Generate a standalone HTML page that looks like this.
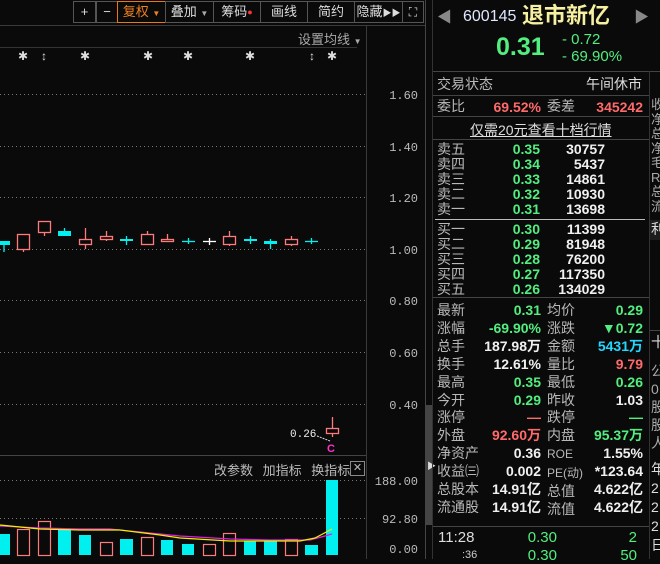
<!DOCTYPE html>
<html><head><meta charset="utf-8"><style>
*{margin:0;padding:0;box-sizing:border-box}
body{width:660px;height:559px;background:#0a0a0a;overflow:hidden;position:relative;font-family:"Liberation Sans","Noto Sans CJK SC",sans-serif;color:#ccc}
.a{position:absolute;white-space:nowrap}
.tb{position:absolute;top:1px;height:22px;border:1px solid #555;color:#ddd;font-size:13px;line-height:20px;text-align:center}
.lb{font-size:14px;color:#b8b8b8;line-height:15px}
.n{font-family:"Liberation Sans","Noto Sans CJK SC",sans-serif;font-weight:bold;font-size:14px;text-align:right}
.g{color:#52ee7f}.r{color:#ff6a6a}.w{color:#f0f0f0}.c{color:#22d8ff}
.hl{position:absolute;height:1px;background:#444}
</style></head><body>
<!-- toolbar -->
<div class="tb" style="left:73px;width:23px">+</div>
<div class="tb" style="left:96px;width:22px">−</div>
<div class="tb" style="left:117px;width:49px;border-color:#e87a10;color:#f08020">复权 <span style="font-size:8px">▼</span></div>
<div class="tb" style="left:165px;width:49px">叠加 <span style="font-size:8px;color:#aaa">▼</span></div>
<div class="tb" style="left:213px;width:48px">筹码<span style="color:#f33;font-size:9px;vertical-align:top">●</span></div>
<div class="tb" style="left:260px;width:48px">画线</div>
<div class="tb" style="left:307px;width:48px">简约</div>
<div class="tb" style="left:354px;width:49px">隐藏<span style="font-size:9px">▶▶</span></div>
<div class="tb" style="left:402px;width:22px;font-size:12px">⛶</div>
<div class="hl" style="left:0;top:25px;width:425px;background:#3a3a3a"></div>
<div class="a" style="left:298px;top:29px;font-size:13px;color:#aaa">设置均线 <span style="font-size:8px">▼</span></div>
<div class="hl" style="left:0;top:47px;width:357px;background:#333"></div>
<div class="hl" style="left:0;top:455px;width:366px;background:#444"></div>
<div class="a" style="left:366px;top:26px;width:1px;height:533px;background:#3a3a3a"></div>
<div class="a" style="left:425px;top:0;width:1px;height:559px;background:#444"></div>
<div class="a" style="left:426px;top:405px;width:6px;height:120px;background:#444"></div>
<div class="a" style="left:427px;top:459px;font-size:9px;color:#ddd">▶</div>
<div class="a" style="left:432px;top:0;width:1px;height:559px;background:#333"></div>
<svg class="a" style="left:0;top:0" width="425" height="559" xmlns="http://www.w3.org/2000/svg">
<g stroke="#777" stroke-dasharray="1 3" stroke-width="1">
<line x1="0" y1="94.5" x2="368" y2="94.5"/><line x1="0" y1="146.5" x2="368" y2="146.5"/><line x1="0" y1="197.5" x2="368" y2="197.5"/><line x1="0" y1="249.5" x2="368" y2="249.5"/><line x1="0" y1="300.5" x2="368" y2="300.5"/><line x1="0" y1="352.5" x2="368" y2="352.5"/><line x1="0" y1="404.5" x2="368" y2="404.5"/>
<line x1="0" y1="480.5" x2="368" y2="480.5"/><line x1="0" y1="518.5" x2="368" y2="518.5"/>
</g>
<g font-family="Liberation Mono,monospace" font-size="12" fill="#bbb" text-anchor="end">
<text x="418" y="99">1.60</text><text x="418" y="151">1.40</text><text x="418" y="202">1.20</text><text x="418" y="254">1.00</text><text x="418" y="305">0.80</text><text x="418" y="357">0.60</text><text x="418" y="409">0.40</text>
<text x="418" y="485">188.00</text><text x="418" y="523">92.80</text><text x="418" y="553">0.00</text>
</g>
<g fill="#ddd" font-size="12" font-family="Liberation Sans,sans-serif" text-anchor="middle">
<text x="23" y="60">✱</text><text x="44" y="60">↕</text><text x="85" y="60">✱</text><text x="148" y="60">✱</text><text x="188" y="60">✱</text><text x="250" y="60">✱</text><text x="312" y="60">↕</text><text x="332" y="60">✱</text>
</g>
<g stroke-width="1.3">
<line x1="4" y1="245" x2="4" y2="252" stroke="#00f0f0"/><rect x="0" y="241" width="10" height="4" fill="#00f0f0"/>
<line x1="23.5" y1="249" x2="23.5" y2="252" stroke="#ff7a7a"/><rect x="17.5" y="234.5" width="12" height="15" fill="none" stroke="#ff7a7a"/>
<line x1="44.5" y1="232" x2="44.5" y2="236" stroke="#ff7a7a"/><rect x="38.5" y="221.5" width="12" height="11" fill="none" stroke="#ff7a7a"/>
<line x1="64.5" y1="228" x2="64.5" y2="232" stroke="#00f0f0"/><rect x="58" y="231" width="13" height="5" fill="#00f0f0"/>
<line x1="85.5" y1="228" x2="85.5" y2="249" stroke="#ff7a7a"/><rect x="79.5" y="239.5" width="12" height="5" fill="#0a0a0a" stroke="#ff7a7a"/>
<line x1="106.5" y1="231" x2="106.5" y2="241" stroke="#ff7a7a"/><rect x="100.5" y="236.5" width="12" height="3" fill="#0a0a0a" stroke="#ff7a7a"/>
<line x1="126.5" y1="236" x2="126.5" y2="245" stroke="#00f0f0"/><rect x="120" y="239" width="13" height="2" fill="#00f0f0"/>
<line x1="147.5" y1="231" x2="147.5" y2="234" stroke="#ff7a7a"/><rect x="141.5" y="234.5" width="12" height="10" fill="none" stroke="#ff7a7a"/>
<line x1="167.5" y1="234" x2="167.5" y2="239" stroke="#ff7a7a"/><rect x="161.5" y="239.5" width="12" height="2" fill="none" stroke="#ff7a7a"/>
<line x1="188.5" y1="238" x2="188.5" y2="244" stroke="#00f0f0"/><line x1="182" y1="241.5" x2="195" y2="241.5" stroke="#00f0f0"/>
<line x1="209.5" y1="238" x2="209.5" y2="245" stroke="#fff"/><line x1="203" y1="241.5" x2="216" y2="241.5" stroke="#fff"/>
<line x1="229.5" y1="231" x2="229.5" y2="246" stroke="#ff7a7a"/><rect x="223.5" y="236.5" width="12" height="8" fill="#0a0a0a" stroke="#ff7a7a"/>
<line x1="250.5" y1="236" x2="250.5" y2="244" stroke="#00f0f0"/><rect x="244" y="239" width="13" height="2" fill="#00f0f0"/>
<line x1="270.5" y1="239" x2="270.5" y2="249" stroke="#00f0f0"/><rect x="264" y="241" width="13" height="3" fill="#00f0f0"/>
<line x1="291.5" y1="236" x2="291.5" y2="246" stroke="#ff7a7a"/><rect x="285.5" y="239.5" width="12" height="5" fill="#0a0a0a" stroke="#ff7a7a"/>
<line x1="311.5" y1="238" x2="311.5" y2="244" stroke="#00f0f0"/><line x1="305" y1="241.5" x2="318" y2="241.5" stroke="#00f0f0"/>
<line x1="332.5" y1="417" x2="332.5" y2="437" stroke="#ff7a7a"/><rect x="326.5" y="428.5" width="12" height="5" fill="#0a0a0a" stroke="#ff7a7a"/>
</g>
<text x="290" y="437" fill="#eee" font-size="11" font-family="Liberation Mono,monospace">0.26</text>
<path d="M317 436 L330 441" stroke="#ddd" stroke-dasharray="2 1"/>
<text x="327" y="452" fill="#ff30d0" font-size="11" font-weight="bold" font-family="Liberation Sans,sans-serif">C</text>
<g fill="#00f0f0"><rect x="0" y="534" width="10" height="21"/><rect x="58" y="529" width="13" height="26"/><rect x="79" y="535" width="12" height="20"/><rect x="120" y="539" width="13" height="16"/><rect x="161" y="540" width="12" height="15"/><rect x="182" y="544" width="12" height="11"/><rect x="244" y="541" width="12" height="14"/><rect x="264" y="541" width="13" height="14"/><rect x="305" y="545" width="13" height="10"/><rect x="326" y="480" width="12" height="75"/></g>
<g fill="none" stroke="#ff7a7a" stroke-width="1.2"><rect x="17.5" y="529.5" width="12" height="26"/><rect x="38.5" y="521.5" width="12" height="34"/><rect x="100.5" y="542.5" width="12" height="13"/><rect x="141.5" y="537.5" width="12" height="18"/><rect x="203.5" y="544.5" width="12" height="11"/><rect x="223.5" y="533.5" width="12" height="22"/><rect x="285.5" y="539.5" width="12" height="16"/></g>
<polyline points="0,526 40,528 80,529 110,529 140,532 180,536 230,539 270,540 310,540 325,536 332,534" fill="none" stroke="#e020e0" stroke-width="1.2"/>
<polyline points="0,525 40,529 80,530 120,530 160,535 180,538 230,541 270,541 300,541 315,538 332,529" fill="none" stroke="#f0f000" stroke-width="1.2"/>
</svg>
<div class="a" style="left:214px;top:460px;font-size:13px;color:#bbb;word-spacing:6px">改参数 加指标 换指标</div>
<div class="a" style="left:350px;top:461px;width:15px;height:15px;border:1px solid #888;color:#bbb;font-size:11px;line-height:13px;text-align:center">✕</div>
<!-- right panel -->
<div class="a" style="left:437px;top:6px;font-size:15px;color:#888">◀</div>
<div class="a" style="left:634px;top:6px;font-size:15px;color:#888">▶</div>
<div class="a" style="left:463px;top:8px;font-size:16px;color:#e0e8ff">600145</div>
<div class="a" style="left:522px;top:3px;font-size:22px;font-weight:bold;color:#f6f0a0;line-height:26px">退市新亿</div>
<div class="a g" style="left:496px;top:33px;font-size:25px;font-weight:bold;line-height:28px">0.31</div>
<div class="a g" style="left:562px;top:32px;font-size:15px;line-height:16px">- 0.72</div>
<div class="a g" style="left:562px;top:49px;font-size:15px;line-height:16px">- 69.90%</div>
<div class="hl" style="left:433px;top:71px;width:227px"></div>
<div class="a" style="left:649px;top:71px;width:1px;height:488px;background:#333"></div>
<div class="a lb" style="left:437px;top:77px">交易状态</div>
<div class="a lb" style="left:586px;top:77px;color:#ddd">午间休市</div>
<div class="hl" style="left:433px;top:95px;width:216px"></div>
<div class="a lb" style="left:437px;top:99px">委比</div>
<div class="a n r" style="left:470px;top:99px;width:71px">69.52%</div>
<div class="a lb" style="left:547px;top:99px">委差</div>
<div class="a n r" style="left:580px;top:99px;width:63px">345242</div>
<div class="hl" style="left:433px;top:116px;width:216px"></div>
<div class="a" style="left:470px;top:120px;font-size:14px;color:#ddd;text-decoration:underline">仅需20元查看十档行情</div>
<div class="hl" style="left:433px;top:139px;width:216px"></div>
<div class="a" style="left:433px;top:142px;width:216px">
<div style="position:relative;height:155px">
<div class="a lb" style="left:4px;top:0;line-height:15px">卖五<br>卖四<br>卖三<br>卖二<br>卖一</div>
<div class="a n g" style="left:60px;top:0;width:47px;line-height:15px">0.35<br>0.34<br>0.33<br>0.32<br>0.31</div>
<div class="a n w" style="left:120px;top:0;width:52px;line-height:15px">30757<br>5437<br>14861<br>10930<br>13698</div>
<div class="a" style="left:2px;top:77px;width:210px;height:1px;background:#bbb"></div>
<div class="a lb" style="left:4px;top:80px;line-height:15px">买一<br>买二<br>买三<br>买四<br>买五</div>
<div class="a n g" style="left:60px;top:80px;width:47px;line-height:15px">0.30<br>0.29<br>0.28<br>0.27<br>0.26</div>
<div class="a n w" style="left:110px;top:80px;width:62px;line-height:15px">11399<br>81948<br>76200<br>117350<br>134029</div>
</div></div>
<div class="hl" style="left:433px;top:297px;width:216px"></div>
<div class="a lb" style="left:437px;top:302px;line-height:17.9px">最新<br>涨幅<br>总手<br>换手<br>最高<br>今开<br>涨停<br>外盘<br>净资产<br>收益㈢<br>总股本<br>流通股</div>
<div class="a n" style="left:470px;top:302px;width:71px;line-height:17.9px"><span class="g">0.31</span><br><span class="g">-69.90%</span><br><span class="w">187.98万</span><br><span class="w">12.61%</span><br><span class="g">0.35</span><br><span class="g">0.29</span><br><span class="r">—</span><br><span class="r">92.60万</span><br><span class="w">0.36</span><br><span class="w">0.002</span><br><span class="w">14.91亿</span><br><span class="w">14.91亿</span></div>
<div class="a lb" style="left:547px;top:302px;line-height:17.9px">均价<br>涨跌<br>金额<br>量比<br>最低<br>昨收<br>跌停<br>内盘<br><span style="font-size:12px">ROE</span><br><span style="font-size:12px">PE(动)</span><br>总值<br>流值</div>
<div class="a n" style="left:575px;top:302px;width:68px;line-height:17.9px"><span class="g">0.29</span><br><span class="g">▼0.72</span><br><span class="c">5431万</span><br><span class="r">9.79</span><br><span class="g">0.26</span><br><span class="w">1.03</span><br><span class="g">—</span><br><span class="g">95.37万</span><br><span class="w">1.55%</span><br><span class="w">*123.64</span><br><span class="w">4.622亿</span><br><span class="w">4.622亿</span></div>
<div class="hl" style="left:433px;top:526px;width:216px"></div>
<div class="a" style="left:438px;top:529px;font-size:15px;color:#ddd">11:28</div>
<div class="a n g" style="left:520px;top:529px;width:37px;font-size:15px;font-weight:normal">0.30</div>
<div class="a n g" style="left:600px;top:529px;width:37px;font-size:15px;font-weight:normal">2</div>
<div class="a" style="left:462px;top:549px;font-size:11px;color:#ccc">:36</div>
<div class="a n g" style="left:520px;top:547px;width:37px;font-size:15px;font-weight:normal">0.30</div>
<div class="a n g" style="left:600px;top:547px;width:37px;font-size:15px;font-weight:normal">50</div>
<div class="a lb" style="left:651px;top:98px;line-height:14.5px;color:#aaa;font-size:13px">收<br>净<br>总<br>净<br>毛<br>R<br>总<br>流</div>
<div class="a" style="left:650px;top:220px;width:10px;height:20px;background:#1d1d1d"></div>
<div class="a lb" style="left:651px;top:222px;color:#ddd">利</div>
<div class="hl" style="left:650px;top:330px;width:10px"></div>
<div class="a lb" style="left:651px;top:335px;color:#ddd">十</div>
<div class="a lb" style="left:651px;top:362px;line-height:18px;color:#aaa">公<br>0<br>股<br>股<br>人</div>
<div class="a lb" style="left:651px;top:460px;line-height:19px;color:#ddd">年<br>2<br>2<br>2<br>日</div>
</body></html>
